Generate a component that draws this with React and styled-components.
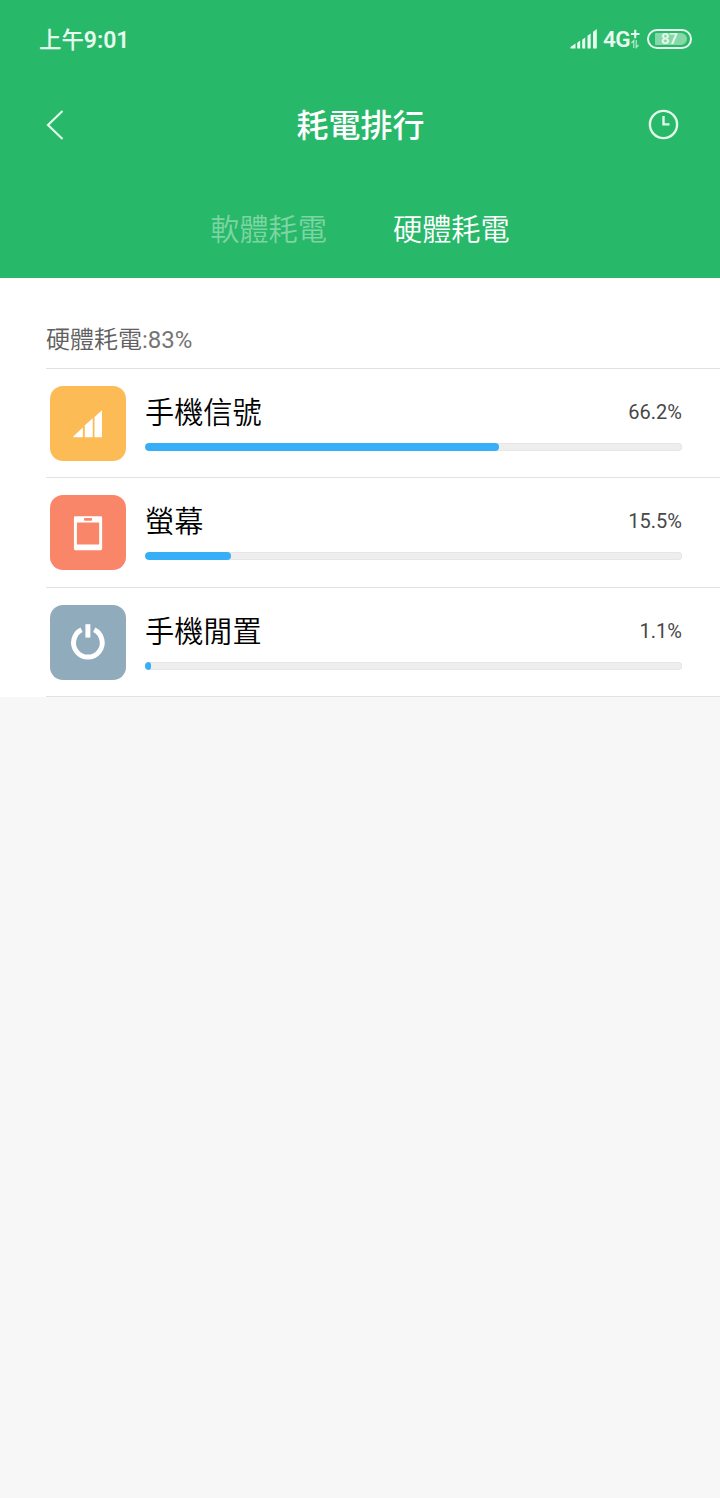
import React from 'react';
import styled, { createGlobalStyle } from 'styled-components';

const GlobalStyle = createGlobalStyle`
  *, *::before, *::after { box-sizing: border-box; }
  body {
    margin: 0;
    background: #f7f7f7;
    font-family: Roboto, 'Noto Sans CJK TC', sans-serif;
  }
`;

const lightStack = "Roboto, 'Noto Sans CJK TC DemiLight', 'Noto Sans CJK TC', sans-serif";

const Screen = styled.div`
  width: 720px;
  min-height: 1498px;
  background: #f7f7f7;
`;

const Header = styled.header`
  height: 278px;
  background: #28b869;
  color: #fff;
`;

const StatusBar = styled.div`
  display: flex;
  align-items: center;
  justify-content: space-between;
  height: 78px;
  padding: 0 28px 0 39px;
  color: #e6fbee;
`;

const Clock = styled.time`
  padding-top: 2px;
  font-size: 22.4px;
  line-height: 30px;
  font-weight: 500;
  white-space: nowrap;
`;

const ClockDigits = styled.span`
  font-size: 23px;
  font-weight: 600;
`;

const StatusIcons = styled.div`
  display: flex;
  align-items: center;
  height: 20px;
`;

const Network = styled.span`
  width: 27px;
  margin-left: 6px;
  font-size: 22.5px;
  line-height: 22px;
  font-weight: 600;
  letter-spacing: -0.6px;
`;

const Battery = styled.div`
  display: flex;
  align-items: center;
  width: 45px;
  height: 20px;
  margin-left: 7px;
  padding-left: 6px;
  border: 2px solid #e6fbee;
  border-radius: 10px;
`;

const Charge = styled.span`
  width: 32px;
  height: 12px;
  padding-left: 6px;
  border-radius: 1px 6px 6px 1px;
  background: #86d8a8;
  font-size: 15px;
  line-height: 13px;
  font-weight: 600;
  letter-spacing: -0.4px;
`;

const TitleBar = styled.div`
  display: flex;
  align-items: center;
  justify-content: space-between;
  height: 94px;
  padding: 0 41px 0 46px;
`;

const IconButton = styled.button`
  display: flex;
  width: 31px;
  padding: 0;
  border: 0;
  background: none;
  color: #e0f9e9;
  justify-content: ${(p) => (p.$end ? 'flex-end' : 'flex-start')};
`;

const Title = styled.h1`
  margin: 0;
  padding: 2px 4px 0 0;
  font-size: 32px;
  line-height: 44px;
  font-weight: 500;
`;

const Tabs = styled.nav`
  display: flex;
  justify-content: center;
  align-items: center;
  gap: 66px;
  height: 112px;
  padding-top: 3px;
`;

const Tab = styled.span`
  font-family: ${lightStack};
  font-size: 29.2px;
  line-height: 40px;
  font-weight: 300;
  color: ${(p) => (p.$active ? '#fff' : '#7cd5a2')};
`;

const Panel = styled.main`
  padding-left: 46px;
  background: #fff;
`;

const Summary = styled.h2`
  height: 90px;
  margin: 0;
  padding-top: 45px;
  font-family: ${lightStack};
  font-size: 24px;
  line-height: 34px;
  font-weight: 300;
  color: #606060;
`;

const SummaryValue = styled.span`
  font-weight: 400;
  color: #757575;
`;

const Row = styled.section`
  display: flex;
  height: 109.3px;
  padding: 17px 38px 0 4.4px;
  gap: 19.4px;
  border-top: 1px solid #e2e2e2;
  &:last-child { border-bottom: 1px solid #e2e2e2; height: 110.4px; }
`;

const Tile = styled.div`
  display: flex;
  width: 75.2px;
  height: 75.2px;
  flex: none;
  border-radius: 13px;
  background: ${(p) => p.$color};
`;

const Details = styled.div`
  flex: 1;
`;

const Labels = styled.div`
  display: flex;
  justify-content: space-between;
  height: 57px;
  padding-top: 7px;
`;

const Name = styled.span`
  font-family: ${lightStack};
  font-size: 29.2px;
  line-height: 40px;
  font-weight: 300;
  color: #000;
`;

const Percent = styled.span`
  font-size: 20px;
  line-height: 38px;
  color: #484848;
  font-weight: 400;
`;

const Track = styled.div`
  height: 8px;
  overflow: hidden;
  border-radius: 4px;
  background: #eee;
  box-shadow: inset 0 0 0 1px #e6e6e6;
`;

const Fill = styled.div`
  height: 100%;
  border-radius: 4px;
  background: #37aef8;
`;

const SignalBars = () => (
  <svg width="27" height="20" viewBox="0 0 27 20" fill="#e6fbee">
    <path d="M0.500 19.5V18L5.500 14.500v5zM7.200 13.700l3-2.200v8H7.200zM12.200 10.700l3-2.200v11h-3zM17.500 6.800l3.200-2.200v14.900h-3.200zM23 2.800L26.800 0v19.5H23z" />
  </svg>
);

const DataArrows = () => (
  <svg width="10" height="20" viewBox="0 0 10 20" fill="none" stroke="#e6fbee">
    <path d="M1 5h8.500M5.250 .7v8.600" strokeWidth="2" />
    <path d="M1.500 14L3.800 11.500V19M6.200 11v7.500L8.500 16" strokeWidth="1.200" opacity=".75" />
  </svg>
);

const BackIcon = () => (
  <svg width="20" height="30" viewBox="0 0 20 30" fill="none" stroke="currentColor" strokeWidth="2.2">
    <path d="M16.5 1L2 15l14.5 14" />
  </svg>
);

const HistoryIcon = () => (
  <svg width="31" height="32" viewBox="0 0 31 32" fill="none" stroke="currentColor" strokeWidth="2.4">
    <circle cx="15.5" cy="15.5" r="13.6" />
    <path d="M15.5 7v8.400h6" />
  </svg>
);

const SignalIcon = () => (
  <svg width="76" height="76" viewBox="-0.700 -0.500 76 76" fill="#fff">
    <path d="M23 51v-1.2L32.5 41v10zM34.500 38.8l8-7V51h-8zM44.300 30.300l7.500-6.8V51h-7.500z" />
  </svg>
);

const ScreenIcon = () => (
  <svg width="76" height="76" viewBox="-0.700 -0.500 76 76" fill="#fff" fillRule="evenodd">
    <path d="M25 20.500h25.500q1.500 0 1.500 1.500v31.500q0 1.500-1.500 1.500H25q-1.500 0-1.500-1.500V22Q23.500 20.500 25 20.500zM26.500 27V49H49V27zM34.500 22.300q-.8 0-.8.8v1.200q0 .8.800.8h6.500q.8 0 .8-.8v-1.200q0-.8-.8-.8z" />
  </svg>
);

const PowerIcon = () => (
  <svg width="76" height="76" viewBox="-0.700 0 76 76" fill="none" stroke="#fff">
    <path d="M31.200 24.700A14.500 14.500 0 1 0 44 24.700" strokeWidth="5" />
    <path d="M37.600 19v13.500" strokeWidth="5" />
  </svg>
);

const usage = [
  { name: '手機信號', percent: '66.2%', fill: 66, color: '#fdbb56', Icon: SignalIcon },
  { name: '螢幕', percent: '15.5%', fill: 16, color: '#fa866a', Icon: ScreenIcon },
  { name: '手機閒置', percent: '1.1%', fill: 1.2, color: '#90abbc', Icon: PowerIcon },
];

export default function App() {
  return (
    <Screen lang="zh-Hant">
      <GlobalStyle />
      <Header>
        <StatusBar>
          <Clock>上午<ClockDigits>9:01</ClockDigits></Clock>
          <StatusIcons>
            <SignalBars />
            <Network>4G</Network>
            <DataArrows />
            <Battery><Charge>87</Charge></Battery>
          </StatusIcons>
        </StatusBar>
        <TitleBar>
          <IconButton aria-label="返回"><BackIcon /></IconButton>
          <Title>耗電排行</Title>
          <IconButton aria-label="歷史" $end><HistoryIcon /></IconButton>
        </TitleBar>
        <Tabs>
          <Tab>軟體耗電</Tab>
          <Tab $active>硬體耗電</Tab>
        </Tabs>
      </Header>
      <Panel>
        <Summary>硬體耗電<SummaryValue>:83%</SummaryValue></Summary>
        {usage.map(({ name, percent, fill, color, Icon }) => (
          <Row key={name}>
            <Tile $color={color}><Icon /></Tile>
            <Details>
              <Labels>
                <Name>{name}</Name>
                <Percent>{percent}</Percent>
              </Labels>
              <Track><Fill style={{ width: `${fill}%` }} /></Track>
            </Details>
          </Row>
        ))}
      </Panel>
    </Screen>
  );
}
